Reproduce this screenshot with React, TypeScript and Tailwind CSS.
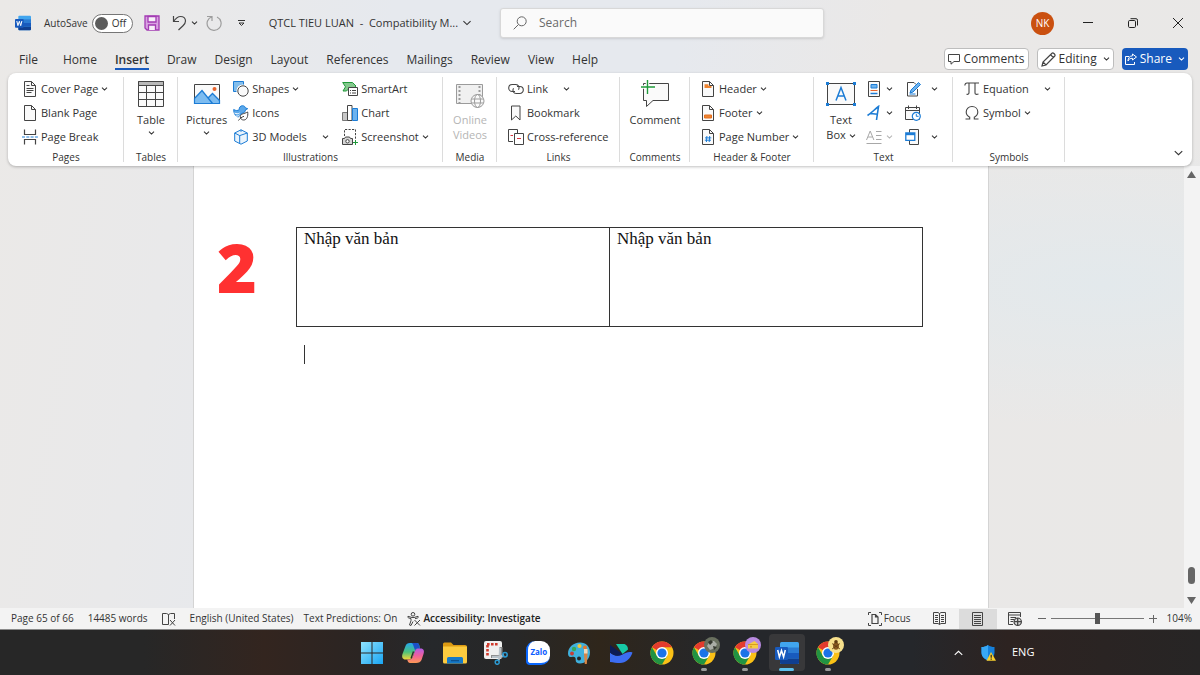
import React from "react";
import clsx from "clsx";

type IconProps = { className?: string };

const ink = "#444444";
const blue = "#1c7cd5";

const Arrow = ({ className = "h-[4px] w-[7px]" }: IconProps) => (
  <svg className={clsx("shrink-0", className)} viewBox="0 0 7 4" fill="none" stroke="currentColor" strokeWidth="1.1">
    <path d="M1 .7 3.5 3.1 6 .7" vectorEffect="non-scaling-stroke" />
  </svg>
);

const WordLogo = ({ className = "" }: IconProps) => (
  <svg className={className} viewBox="0 0 24 24">
    <rect x="5" y="1" width="19" height="22" rx="1.5" fill="#41a5ee" />
    <path d="M5 6.500h19V12H5z" fill="#2b7cd3" />
    <path d="M5 12h19v5.500H5z" fill="#185abd" />
    <path d="M5 17.500h19v4a1.500 1.500 0 0 1-1.500 1.500H6.500A1.500 1.500 0 0 1 5 21.500z" fill="#103f91" />
    <rect x="0" y="6" width="13" height="13" rx="1.300" fill="#185abd" />
    <path d="m2.700 9 1.700 7 2.100-6.600L8.600 16l1.700-7" fill="none" stroke="#fff" strokeWidth="1.500" />
  </svg>
);

const Sheet = ({ children }: { children?: React.ReactNode }) => (
  <svg className="h-4 w-4" viewBox="0 0 16 16" fill="none" stroke={ink}>
    <path d="M2.500.500h7L13.500 4.500v11h-11z" fill="#fafafa" />
    <path d="M9.500.500v4h4" />
    {children}
  </svg>
);

const CoverPageIcon = () => (
  <Sheet>
    <path d="M4.500 4.500h3M4.500 7.500h7M4.500 9.500h7M4.500 11.500h5" />
  </Sheet>
);

const PageBreakIcon = () => (
  <svg className="h-4 w-4" viewBox="0 0 16 16" fill="none" stroke={ink}>
    <path d="M2.500.500v5h11v-5M2.500 15.500v-5h11v5" strokeWidth="1.200" />
    <path d="M0 8h16" stroke={blue} strokeDasharray="3 1.300" />
  </svg>
);

const TableIcon = () => (
  <svg className="h-[28px] w-[28px]" viewBox="0 0 28 28" fill="none" stroke={ink}>
    <path d="M1.500 1.500h25v25h-25z" fill="#fafafa" />
    <path d="M1.500 1.500h25v4h-25z" fill="#b8b8b8" />
    <path d="M1.500 12.500h25M1.500 19.500h25M9.500 5.500v21M18.500 5.500v21" />
  </svg>
);

const PicturesIcon = () => (
  <svg className="h-[28px] w-[28px]" viewBox="0 0 28 28" fill="none">
    <path d="M1.500 4.500h25v19h-25z" fill="#fafafa" stroke={ink} />
    <path d="M2 18.500 9 10.500l10 13H2z" fill="#7dbcf0" />
    <path d="m14.500 18.500 5-5 7 7v3H18z" fill="#7dbcf0" />
    <path d="M1.500 18.500 9 10.500l10.500 13M15 18l4.500-4.500 7 7" stroke={blue} strokeWidth="1.300" />
    <path d="M1.500 18.500v5h25V20" stroke={blue} strokeWidth="1.200" />
    <circle cx="21.500" cy="9" r="2" fill="#e8642c" />
  </svg>
);

const ShapesIcon = () => (
  <svg className="h-4 w-4" viewBox="0 0 16 16" fill="none">
    <path d="M.5.500h10v10H.5z" fill="#83beec" stroke={blue} />
    <circle cx="10" cy="10" r="5.200" fill="#fafafa" stroke="#fff" strokeWidth="2.800" />
    <circle cx="10" cy="10" r="5.200" stroke={ink} />
  </svg>
);

const IconsIcon = () => (
  <svg className="h-4 w-4" viewBox="0 0 16 16" fill="none">
    <path d="M.7 4.500c2 1.300 4 1.300 5.500.2C6 2.300 7.500.700 9.500.700c1.700 0 2.700 1 2.900 2.200l2.300.8-2.300 1.200C12.300 6.500 11.500 7.500 10 8 7 8.500 5.500 12 5.500 12 2.500 11.500.700 8.500.700 4.500z" fill="#5ba8ea" stroke={blue} />
    <path d="M1.500 8c2 1 3.500 1 5 0M3 11c1.500.3 2.500 0 3.500-1" stroke="#fff" />
    <path d="M14.700 7c.6 4.500-1 8-3.900 8-2 0-3.500-1.200-3.500-3.200 0-3.200 3.700-2.800 7.400-4.800z" fill="#fff" stroke={ink} />
    <path d="M5.500 15.500c1-1.700 3-3.500 5.500-4.200" stroke={ink} />
  </svg>
);

const CubeIcon = () => (
  <svg className="h-4 w-4" viewBox="0 0 16 16" fill="none" stroke={blue} strokeLinejoin="round">
    <path d="m8 .8 6.300 3.200v8L8 15.200 1.700 12V4z" fill="#eaf4fc" />
    <path d="m1.700 4 5 2.600v7.800M6.700 6.600 14.300 4M8 .8v2" />
  </svg>
);

const SmartArtIcon = () => (
  <svg className="h-4 w-4" viewBox="0 0 16 16" fill="none">
    <path d="M.7 1.500h9.800l3.500 3.500-3 3H6.500L4.500 10H1l2.500-4.200z" fill="#84c98d" stroke="#209a3b" />
    <path d="M6.500 6.500h9v8h-9z" fill="#fff" stroke={ink} />
    <path d="M8 9.500h1M8 12h1M10 9.500h4M10 12h4" stroke={ink} />
  </svg>
);

const ChartIcon = () => (
  <svg className="h-4 w-4" viewBox="0 0 16 16">
    <path d="M.5 7.500h5v8h-5z" fill="#c8c8c8" stroke="#777" />
    <path d="M5.500.500h4.500v15H5.500z" fill="#fff" stroke={ink} />
    <path d="M10.500 3.500h5v12h-5z" fill="#6db3ef" stroke={blue} />
  </svg>
);

const ScreenshotIcon = () => (
  <svg className="h-4 w-4" viewBox="0 0 16 16" fill="none">
    <path d="M2.500 7V.5h11v10" stroke={ink} strokeDasharray="2.200 1.300" />
    <path d="M.5 9.500h2l1-1.500h4l1 1.500h2v6H.5z" fill="#d5d5d5" stroke={ink} />
    <circle cx="5.500" cy="12.300" r="1.700" fill="#fff" stroke={ink} />
    <path d="M13.500 11v5M11 13.500h5" stroke="#209a3b" />
  </svg>
);

const VideoIcon = () => (
  <svg className="h-[28px] w-[30px]" viewBox="0 0 30 28" fill="none" stroke="#9b9b9b">
    <path d="M1.500 4.500h26v19h-26z" fill="#f0f0f0" />
    <path d="M4.500 6v17M24.500 6v9" strokeWidth="2" strokeDasharray="2 2" />
    <circle cx="22.500" cy="21" r="6.500" fill="#fafafa" />
    <ellipse cx="22.500" cy="21" rx="3" ry="6.500" />
    <path d="M16.500 19h12M16.500 23h12" />
  </svg>
);

const LinkIcon = () => (
  <svg className="h-4 w-4" viewBox="0 0 16 16" fill="none" stroke={ink} strokeWidth="1.100">
    <path d="M7 10.500H4.200a3.500 3.500 0 0 1 0-7h3.600a3.400 3.400 0 0 1 2.700 5.300" />
    <path d="M9 5.500h2.800a3.500 3.500 0 0 1 0 7H8.200a3.400 3.400 0 0 1-2.700-5.300" />
  </svg>
);

const BookmarkIcon = () => (
  <svg className="h-4 w-4" viewBox="0 0 16 16" fill="none" stroke={ink}>
    <path d="M3.500 1h8.500v14l-4.200-4-4.300 4z" fill="#fafafa" />
  </svg>
);

const CrossRefIcon = () => (
  <svg className="h-4 w-4" viewBox="0 0 16 16" fill="none" stroke={ink}>
    <path d="M5 12.500H.5v-12h9V4" />
    <path d="M6.500 4.500h9v11h-9z" fill="#fff" />
    <path d="M2.500 6.500H5M9 9.500h4" stroke="#d9363e" />
  </svg>
);

const CommentIcon = () => (
  <svg className="h-[28px] w-[30px]" viewBox="0 0 30 28" fill="none">
    <path d="M3.500 3.500h25v17H13l-6.500 6v-6h-3z" fill="#fafafa" stroke={ink} />
    <path d="M7.500 0v14M1 7h14" stroke="#fff" strokeWidth="3.500" />
    <path d="M7.500 0v14M1 7h14" stroke="#209a3b" strokeWidth="1.400" />
  </svg>
);

const HeaderIcon = () => (
  <Sheet>
    <path d="M4.500 4.200h4M4.500 6h7" stroke="#ee8430" strokeWidth="1.800" />
  </Sheet>
);

const FooterIcon = () => (
  <Sheet>
    <path d="M4.500 10h7v3h-7z" fill="#ee8430" stroke="#e36f1e" />
  </Sheet>
);

const PageNumberIcon = () => (
  <Sheet>
    <path d="M6.900 7 6.400 13M9.700 7 9.200 13M5 8.900h6.300M4.800 11.200H11" stroke={blue} />
  </Sheet>
);

const TextBoxIcon = () => (
  <svg className="h-[28px] w-[30px]" viewBox="0 0 30 28" fill="none">
    <path d="M1.500 3.500h27v21h-27z" fill="#fafafa" stroke={ink} />
    <path d="M0 2h3v3H0zM27 2h3v3h-3zM0 23h3v3H0zM27 23h3v3h-3z" fill={blue} />
    <path d="m10 20.500 5-13 5 13M11.500 16h7" stroke={blue} strokeWidth="1.500" />
  </svg>
);

const QuickPartsIcon = () => (
  <svg className="h-4 w-4" viewBox="0 0 16 16" fill="none">
    <path d="M2.500.500h11v15h-11z" fill="#fafafa" stroke={ink} />
    <path d="M5 3.500h6v3.500H5z" fill="#6db3ef" stroke={blue} />
    <path d="M4.500 9.500h7" stroke="#e8642c" />
    <path d="M4.500 12.500h7" stroke={blue} strokeWidth="1.500" />
  </svg>
);

const WordArtIcon = () => (
  <svg className="h-4 w-4" viewBox="0 0 16 16" fill="none" stroke={blue} strokeWidth="1.600">
    <path d="M1.500 10.500C6 7.500 9 4 12.500 1.500l-2 13.500M4.500 8.500l7 .8" />
  </svg>
);

const DropCapIcon = () => (
  <svg className="h-4 w-4" viewBox="0 0 16 16" fill="none" stroke="#a8a8a8">
    <path d="m.5 11 3.700-9 3.700 9M2 8h4.500M10 2.500h5.500M10 6.500h5.500M10 10.500h5.500M.5 14.500h15" />
  </svg>
);

const SignatureIcon = () => (
  <svg className="h-4 w-4" viewBox="0 0 16 16" fill="none">
    <path d="M9 1.500H2.500v13.500h10V8M9 1.500 11 3.500" stroke={ink} />
    <path d="m6 9 7.500-7.500 2 2L8 11l-3 1z" fill="#6db3ef" stroke={blue} />
    <path d="M4.500 13h6" stroke={blue} />
  </svg>
);

const DateIcon = () => (
  <svg className="h-4 w-4" viewBox="0 0 16 16" fill="none">
    <path d="M.5 2.500h14v12H.5z" fill="#fafafa" stroke={ink} />
    <path d="M.5 5.500h14M3.500.5V4M11.500.5V4" stroke={ink} />
    <circle cx="11.300" cy="11.300" r="4" fill="#fff" stroke={blue} strokeWidth="1.200" />
    <path d="M11.300 8.800v2.500h2.300" stroke={blue} />
  </svg>
);

const ObjectIcon = () => (
  <svg className="h-4 w-4" viewBox="0 0 16 16" fill="none">
    <path d="M4.500.500h9v15h-9z" fill="#fafafa" stroke={ink} />
    <path d="M.8 3.800h9v7.500h-9z" fill="#fff" stroke={blue} strokeWidth="1.300" />
    <path d="M1 4h9v2.200H1z" fill={blue} />
  </svg>
);

const EquationIcon = () => (
  <svg className="h-4 w-4" viewBox="0 0 16 16" fill="none" stroke={ink} strokeWidth="1.100">
    <path d="M.8 4.500C1 2.500 1.500 2 3 2h12M5 2v9.500c0 1.500-.8 2-2.500 1.800M11 2v10c0 1.500 1.500 1.700 3.500 1" />
  </svg>
);

const OmegaIcon = () => (
  <svg className="h-4 w-4" viewBox="0 0 16 16" fill="none" stroke={ink} strokeWidth="1.100">
    <path d="M1.500 14h4.200v-1.800C3.500 11 2.200 9.300 2.200 7c0-3.200 2.400-5.500 5.800-5.500S13.800 3.800 13.800 7c0 2.300-1.300 4-3.500 5.200V14h4.200" />
  </svg>
);

const ChromeLogo = ({ className = "" }: IconProps) => (
  <svg className={className} viewBox="0 0 24 24">
    <circle cx="12" cy="12" r="11.500" fill="#fbc116" />
    <path d="M12 12 2 6.200A11.500 11.500 0 0 1 22 6.200H12z" fill="#e33b2e" />
    <path d="M2 6.200A11.500 11.500 0 0 0 12 23.500l5-8.500L12 12 7 15z" fill="#229342" />
    <circle cx="12" cy="12" r="6" fill="#fff" />
    <circle cx="12" cy="12" r="4.600" fill="#1a73e8" />
  </svg>
);

type RowButtonProps = {
  icon: React.ReactNode;
  label: string;
  arrow?: boolean;
  spaced?: boolean;
};

const RowButton = ({ icon, label, arrow, spaced }: RowButtonProps) => (
  <button type="button" className="flex h-6 items-center gap-[3px] whitespace-nowrap">
    {icon}
    <span>{label}</span>
    {arrow && <Arrow className={clsx("h-[4px] w-[7px]", spaced && "ml-3")} />}
  </button>
);

type BigButtonProps = {
  icon: React.ReactNode;
  label: React.ReactNode;
  arrow?: boolean;
  disabled?: boolean;
};

const BigButton = ({ icon, label, arrow, disabled }: BigButtonProps) => (
  <button
    type="button"
    disabled={disabled}
    className="flex flex-col items-center pt-[3px] leading-[15px] disabled:text-[#b5b5b5]"
  >
    {icon}
    <span className="mt-1">{label}</span>
    {arrow && <Arrow className="mt-1 h-[4px] w-[7px]" />}
  </button>
);

type SmallButtonProps = {
  icon: React.ReactNode;
  name: string;
  arrow?: boolean;
  spaced?: boolean;
  disabled?: boolean;
};

const SmallButton = ({ icon, name, arrow = true, spaced, disabled }: SmallButtonProps) => (
  <button
    type="button"
    aria-label={name}
    disabled={disabled}
    className={clsx("flex h-6 items-center disabled:text-[#b5b5b5]", spaced ? "gap-[10px]" : "gap-1")}
  >
    {icon}
    {arrow && <Arrow />}
  </button>
);

type GroupProps = { title: string; className: string; rowClassName?: string; children: React.ReactNode };

const Group = ({ title, className, rowClassName, children }: GroupProps) => (
  <section
    className={clsx(
      "relative flex shrink-0 flex-col pt-1 after:absolute after:top-1 after:right-0 after:bottom-1 after:w-px after:bg-[#dcdcdc]",
      className,
    )}
  >
    <div className={clsx("flex h-[72px]", rowClassName)}>{children}</div>
    <h2 className="text-center text-[10px] leading-4">{title}</h2>
  </section>
);

const Ribbon = () => (
  <div className="relative z-10 mx-2 flex h-[93px] shrink-0 rounded-lg bg-white text-[11px] shadow-[0_1px_3px_rgba(0,0,0,0.25)]">
    <Group title="Pages" className="w-[116px]" rowClassName="pl-[14px]">
      <div>
        <RowButton icon={<CoverPageIcon />} label="Cover Page" arrow />
        <RowButton icon={<Sheet />} label="Blank Page" />
        <RowButton icon={<PageBreakIcon />} label="Page Break" />
      </div>
    </Group>
    <Group title="Tables" className="w-[54px]" rowClassName="justify-center">
      <BigButton icon={<TableIcon />} label="Table" arrow />
    </Group>
    <Group title="Illustrations" className="w-[265px]" rowClassName="pl-2">
      <BigButton icon={<PicturesIcon />} label="Pictures" arrow />
      <div className="ml-[6px] w-[109px]">
        <RowButton icon={<ShapesIcon />} label="Shapes" arrow />
        <RowButton icon={<IconsIcon />} label="Icons" />
        <RowButton icon={<CubeIcon />} label="3D Models" arrow spaced />
      </div>
      <div>
        <RowButton icon={<SmartArtIcon />} label="SmartArt" />
        <RowButton icon={<ChartIcon />} label="Chart" />
        <RowButton icon={<ScreenshotIcon />} label="Screenshot" arrow />
      </div>
    </Group>
    <Group title="Media" className="w-[54px]" rowClassName="justify-center">
      <BigButton icon={<VideoIcon />} label={<>Online<br />Videos</>} disabled />
    </Group>
    <Group title="Links" className="w-[123px]" rowClassName="pl-[11px]">
      <div>
        <RowButton icon={<LinkIcon />} label="Link" arrow spaced />
        <RowButton icon={<BookmarkIcon />} label="Bookmark" />
        <RowButton icon={<CrossRefIcon />} label="Cross-reference" />
      </div>
    </Group>
    <Group title="Comments" className="w-[70px]" rowClassName="justify-center">
      <BigButton icon={<CommentIcon />} label="Comment" />
    </Group>
    <Group title="Header &amp; Footer" className="w-[124px]" rowClassName="pl-[10px]">
      <div>
        <RowButton icon={<HeaderIcon />} label="Header" arrow />
        <RowButton icon={<FooterIcon />} label="Footer" arrow />
        <RowButton icon={<PageNumberIcon />} label="Page Number" arrow />
      </div>
    </Group>
    <Group title="Text" className="w-[139px]" rowClassName="pl-3">
      <BigButton
        icon={<TextBoxIcon />}
        label={<>Text<br />Box <Arrow className="inline-block h-[4px] w-[7px]" /></>}
      />
      <div className="ml-[10px]">
        <SmallButton icon={<QuickPartsIcon />} name="Quick Parts" />
        <SmallButton icon={<WordArtIcon />} name="WordArt" />
        <SmallButton icon={<DropCapIcon />} name="Drop Cap" disabled />
      </div>
      <div className="ml-3">
        <SmallButton icon={<SignatureIcon />} name="Signature Line" spaced />
        <SmallButton icon={<DateIcon />} name="Date and Time" arrow={false} />
        <SmallButton icon={<ObjectIcon />} name="Object" spaced />
      </div>
    </Group>
    <Group title="Symbols" className="w-[112px]" rowClassName="pl-[11px]">
      <div>
        <RowButton icon={<EquationIcon />} label="Equation" arrow spaced />
        <RowButton icon={<OmegaIcon />} label="Symbol" arrow />
      </div>
    </Group>
    <button type="button" aria-label="Collapse ribbon" className="mr-2 mb-[10px] ml-auto self-end">
      <Arrow className="h-[6px] w-[11px]" />
    </button>
  </div>
);

const TitleBar = () => (
  <header className="flex h-[46px] shrink-0 items-center">
    <div className="flex w-5/12 items-center pl-[15px] text-[11px]">
      <WordLogo className="h-4 w-4" />
      <label className="ml-[13px] flex items-center gap-1 text-[10px]">
        AutoSave
        <span className="flex h-[19px] w-[41px] items-center gap-1 rounded-full border border-[#767676] bg-white pl-[2px]">
          <input type="checkbox" className="h-[13px] w-[13px] appearance-none rounded-full bg-[#5c5c5c]" />
          Off
        </span>
      </label>
      <button type="button" aria-label="Save" className="ml-[11px]">
        <svg className="h-4 w-4" viewBox="0 0 16 16" fill="none" stroke="#a33bb3" strokeWidth="1.300">
          <path d="M1 1h14v14H3l-2-2z" fill="#d9a3e2" />
          <path d="M4 1.500h8v5.500H4zM4.500 15v-5h7v5" fill="#f7f0f8" />
        </svg>
      </button>
      <button type="button" aria-label="Undo" className="ml-3 flex items-center gap-1">
        <svg className="h-4 w-[15px]" viewBox="0 0 15 16" fill="none" stroke={ink} strokeWidth="1.200">
          <path d="M1.500 1v5.500H7M1.500 6.500C4 3 6 1.500 8.500 1.500c3 0 5 2 5 4.500 0 2-1 3.300-2.500 4.700L6.500 15" />
        </svg>
        <Arrow />
      </button>
      <button type="button" aria-label="Repeat" className="ml-2">
        <svg className="h-4 w-4" viewBox="0 0 16 16" fill="none" stroke="#9d9d9d" strokeWidth="1.200">
          <path d="M1 1.500h5V6M6 1.700A7 7 0 1 0 11 2" />
        </svg>
      </button>
      <button type="button" aria-label="Customize toolbar" className="ml-4">
        <svg className="h-[7px] w-[7px]" viewBox="0 0 7 7" fill="none" stroke="#333">
          <path d="M0 .5h7M1 3l2.500 2.500L6 3z" />
        </svg>
      </button>
      <button type="button" className="ml-6 flex items-center gap-1 whitespace-nowrap">
        <span>QTCL TIEU LUAN&nbsp; -&nbsp; Compatibility M...</span>
        <Arrow className="h-[6px] w-[10px]" />
      </button>
    </div>
    <div className="flex h-[30px] w-[27%] items-center gap-3 rounded-[3px] border border-[#d8d8d8] bg-[#fafafa] pl-3 shadow-sm">
      <svg className="h-[14px] w-[14px]" viewBox="0 0 14 14" fill="none" stroke="#666">
        <circle cx="8.700" cy="5.300" r="4.500" />
        <path d="M5.500 8.500.7 13.300" />
      </svg>
      <input
        type="search"
        aria-label="Search"
        placeholder="Search"
        className="min-w-0 flex-1 bg-transparent text-xs outline-none placeholder:text-[#6a6a6a]"
      />
    </div>
    <div className="ml-auto flex">
      <button type="button" className="flex w-[45px] justify-center">
        <span className="flex h-[23px] w-[23px] items-center justify-center rounded-full bg-[#ca5010] text-[10px] text-white">
          NK
        </span>
      </button>
      <button type="button" aria-label="Minimize" className="flex w-[45px] items-center justify-center">
        <svg className="h-[10px] w-[10px]" viewBox="0 0 10 10" stroke="#222"><path d="M0 4.500h10" /></svg>
      </button>
      <button type="button" aria-label="Restore" className="flex w-[45px] items-center justify-center">
        <svg className="h-[10px] w-[10px]" viewBox="0 0 10 10" fill="none" stroke="#222">
          <rect x=".5" y="2.500" width="7" height="7" rx="1.200" />
          <path d="M2.500.7H8A1.500 1.500 0 0 1 9.500 2.200v5.300" />
        </svg>
      </button>
      <button type="button" aria-label="Close" className="flex w-[45px] items-center justify-center">
        <svg className="h-[10px] w-[10px]" viewBox="0 0 10 10" stroke="#222"><path d="m0 0 10 10M10 0 0 10" /></svg>
      </button>
    </div>
  </header>
);

const tabs = [
  "File",
  "Home",
  "Insert",
  "Draw",
  "Design",
  "Layout",
  "References",
  "Mailings",
  "Review",
  "View",
  "Help",
];

const TabBar = () => (
  <nav className="flex h-[27px] shrink-0 items-start pr-3 pl-[19px] text-xs">
    <div className="flex gap-[18px]">
      {tabs.map((tab) => (
        <button
          key={tab}
          type="button"
          className={clsx(
            "h-6 border-b-2 pt-[6px] leading-4 first:mr-[7px]",
            tab === "Insert" ? "border-[#185abd] font-semibold" : "border-transparent",
          )}
        >
          {tab}
        </button>
      ))}
    </div>
    <div className="ml-auto flex gap-2 pt-[2px] whitespace-nowrap">
      <button type="button" className="flex h-[22px] items-center gap-[3px] rounded border border-[#bdbdbd] bg-white px-[3px]">
        <svg className="h-3 w-3" viewBox="0 0 12 12" fill="none" stroke={ink}>
          <path d="M.5 1.500h11v7H6l-3 2.700V8.500H.5z" />
        </svg>
        Comments
      </button>
      <button type="button" className="flex h-[22px] items-center gap-[3px] rounded border border-[#bdbdbd] bg-white px-[3px]">
        <svg className="h-[15px] w-[15px]" viewBox="0 0 15 15" fill="none" stroke={ink} strokeWidth="1.200">
          <path d="M1 14l1-4L11 1.200c1-1 4 1.600 2.800 2.800L5 13zM9.500 2.700l2.800 2.800M2 10l3 3" />
        </svg>
        Editing
        <Arrow className="ml-[3px] h-[4px] w-[7px]" />
      </button>
      <button type="button" className="flex h-[22px] items-center gap-[3px] rounded bg-[#185abd] px-[3px] text-white">
        <svg className="h-3 w-3" viewBox="0 0 12 12" fill="none" stroke="#fff">
          <path d="M4 3.500H.5v8h9V9M7.500 1l4 3-4 3V5.300C5 5.300 4 6 3 8c0-3 1.500-5 4.500-5.200z" />
        </svg>
        Share
        <Arrow className="ml-[3px] h-[4px] w-[7px]" />
      </button>
    </div>
  </nav>
);

const DocumentArea = () => (
  <main className="flex min-h-0 flex-1">
    <div className="flex min-w-0 flex-1 justify-center pr-[2px]">
      <article className="flex w-[796px] border-x border-[#d4d4d4] bg-white pt-[61px] pr-[65px]">
        <div className="w-[102px] shrink-0 pt-1 pl-[23px] font-['Open_Sans'] text-[68px] leading-[72px] font-extrabold text-[#ff3131]">
          2
        </div>
        <div className="flex-1 font-['Liberation_Serif',serif] text-[17px] text-[#111]">
          <table className="h-[100px] w-full table-fixed border-collapse">
            <tbody>
              <tr>
                <td className="border border-[#333] px-[7px] pt-px align-top leading-5">Nhập văn bản</td>
                <td className="border border-[#333] px-[7px] pt-px align-top leading-5">Nhập văn bản</td>
              </tr>
            </tbody>
          </table>
          <div className="mt-[18px] ml-2 h-[19px] w-px bg-[#333]" />
        </div>
      </article>
    </div>
    <div className="flex w-4 flex-col items-center bg-[#f3f3f3] py-1 pr-px text-[#666]">
      <svg className="mt-px h-[7px] w-[9px]" viewBox="0 0 9 7" fill="currentColor"><path d="M4.500 0 9 7H0z" /></svg>
      <div className="mt-auto mb-[13px] h-[17px] w-[7px] rounded-full bg-[#666]" />
      <svg className="h-[7px] w-[9px]" viewBox="0 0 9 7" fill="currentColor"><path d="M0 0h9L4.500 7z" /></svg>
    </div>
  </main>
);

const StatusBar = () => (
  <footer className="flex h-[22px] shrink-0 items-center border-b border-[#8a8a8a] bg-[#f3f3f3] pr-2 pl-[11px] text-[10px] whitespace-nowrap">
    <span>Page 65 of 66</span>
    <span className="ml-[14px]">14485 words</span>
    <button type="button" aria-label="Proofing errors" className="ml-[14px]">
      <svg className="h-[14px] w-[14px]" viewBox="0 0 14 14" fill="none" stroke={ink}>
        <path d="M6.500 12.500H.5v-11h4l2 1 2-1h4V7M6.500 2.500v10M8 8l5 5.500M13 8l-5 5.500" />
      </svg>
    </button>
    <span className="ml-[14px]">English (United States)</span>
    <span className="ml-[10px]">Text Predictions: On</span>
    <button type="button" className="ml-[10px] flex items-center gap-[2px] font-semibold text-[#222]">
      <svg className="h-[14px] w-[14px]" viewBox="0 0 14 14" fill="none" stroke={ink}>
        <circle cx="6" cy="2.300" r="1.800" />
        <path d="M1 4.300c-.6 1 0 1.400 1 1.700l2 .6v2L2.500 13l1.500.5L6 9.500M1 4.300l4 1.200h2l4-1.200c.7 1 .2 1.500-.8 1.800L8 6.700M7.500 8l5.500 5.500M13 8l-5.500 5.500" />
      </svg>
      Accessibility: Investigate
    </button>

    <button type="button" className="ml-auto flex items-center gap-[2px]">
      <svg className="h-[14px] w-[14px]" viewBox="0 0 14 14" fill="none" stroke={ink}>
        <path d="M3 .5H.5V3M11 .5h2.500V3M3 13.500H.5V11M11 13.500h2.500V11" />
        <path d="M4 2.500h3.500L10 5v6.500H4zM7.500 2.500V5H10" strokeWidth="1.200" />
      </svg>
      Focus
    </button>
    <button type="button" aria-label="Read mode" className="ml-[22px]">
      <svg className="h-[13px] w-[13px]" viewBox="0 0 13 13" fill="none" stroke={ink}>
        <path d="M.5.500h4.500l1.500 1 1.500-1h4.500v11H8l-1.500 1-1.500-1H.5zM6.500 1.500v11M2 3.500h3M2 5.500h3M2 7.500h3M2 9.500h3M8 3.500h3M8 5.500h3M8 7.500h3M8 9.500h3" />
      </svg>
    </button>
    <button type="button" aria-label="Print layout" className="ml-[13px] flex h-5 w-[38px] items-center justify-center bg-[#dcdcdc]">
      <svg className="h-[14px] w-[11px]" viewBox="0 0 11 14" fill="none" stroke={ink}>
        <path d="M.5.5h10v13H.5zM2 3.500h7M2 5.500h7M2 7.500h7M2 9.500h7M2 11.500h7" />
      </svg>
    </button>
    <button type="button" aria-label="Web layout" className="ml-[11px]">
      <svg className="h-[14px] w-[14px]" viewBox="0 0 14 14" fill="none" stroke={ink}>
        <path d="M5 12.500H.5v-12h12V5M.5 3h12M2.500 5.500H8M2.500 7.500H6M2.500 9.500H5" />
        <circle cx="9.700" cy="9.700" r="3.700" fill="#ddd" strokeWidth="1.200" />
        <path d="M6 9.700h7.500M9.700 6v7.500" strokeWidth="1.300" />
      </svg>
    </button>
    <button type="button" aria-label="Zoom out" className="ml-4">
      <svg className="h-2 w-2" viewBox="0 0 8 8" stroke="#666"><path d="M0 3.500h8" /></svg>
    </button>
    <input
      type="range"
      aria-label="Zoom"
      min={0}
      max={100}
      defaultValue={50}
      className="mx-[5px] h-3 w-[93px] appearance-none bg-transparent bg-[linear-gradient(#777,#777)] bg-[length:100%_1px] bg-center bg-no-repeat [&::-webkit-slider-thumb]:h-[11px] [&::-webkit-slider-thumb]:w-[5px] [&::-webkit-slider-thumb]:appearance-none [&::-webkit-slider-thumb]:bg-[#555]"
    />
    <button type="button" aria-label="Zoom in">
      <svg className="h-2 w-2" viewBox="0 0 8 8" stroke="#666"><path d="M0 3.500h8M4.500 0v8" /></svg>
    </button>
    <span className="ml-[10px]">104%</span>
  </footer>
);

const StartLogo = () => (
  <svg className="h-6 w-6" viewBox="0 0 24 24">
    <defs>
      <linearGradient id="start" x1="0" y1="0" x2="1" y2="1">
        <stop offset="0" stopColor="#8fe3ff" />
        <stop offset="1" stopColor="#19a5f2" />
      </linearGradient>
    </defs>
    <path d="M1 1h10.500v10.500H1zM12.500 1H23v10.500H12.500zM1 12.500h10.500V23H1zM12.500 12.500H23V23H12.500z" fill="url(#start)" />
  </svg>
);

const CopilotLogo = () => (
  <svg className="h-6 w-6" viewBox="0 0 24 24">
    <defs>
      <linearGradient id="cpA" x1="0" y1="0" x2="0" y2="1">
        <stop offset="0" stopColor="#25a7ef" />
        <stop offset=".55" stopColor="#4cc27a" />
        <stop offset="1" stopColor="#f3d53a" />
      </linearGradient>
      <linearGradient id="cpB" x1="0" y1="0" x2="0" y2="1">
        <stop offset="0" stopColor="#b35ce6" />
        <stop offset=".5" stopColor="#f0609a" />
        <stop offset="1" stopColor="#fd9a55" />
      </linearGradient>
    </defs>
    <path d="M9 2h7c1.500 0 2 1 2.300 2.500L19 7.500h-2c-1.500 0-2.500 1-3 2.500l-2.500 6.500c-.5 1.300-1.500 2-3 2H4.500c-3 0-4-2.500-3-5.500l3-8C5.200 3 6.500 2 9 2z" fill="url(#cpA)" />
    <path d="M10 2h6c1.500 0 2 1 2.300 2.500L19 7.500h-2c-1.500 0-2.300.6-2.900 2L12 3.500C11.500 2.500 11 2 10 2z" fill="#1c50c8" />
    <path d="M15 22H9c-1.500 0-2-1-2.500-2.500l-.3-1h2.300c1.500 0 2.500-.7 3-2L14 10c.5-1.500 1.500-2.500 3-2.500h2.500c3.500 0 4 2.500 3 5.500l-2 6c-.9 2-2.500 3-5.500 3z" fill="url(#cpB)" />
    <path d="m12.500 10.500-2.500 7" stroke="#26282b" strokeWidth="1.300" />
  </svg>
);

const FolderLogo = () => (
  <svg className="h-6 w-6" viewBox="0 0 24 24">
    <path d="M0 3A1.500 1.500 0 0 1 1.500 1.500H8L10.500 4H22a2 2 0 0 1 2 2v4H0z" fill="#dc9a12" />
    <path d="M0 5.500h24V21a1.500 1.500 0 0 1-1.500 1.500h-21A1.500 1.500 0 0 1 0 21z" fill="#fccb3f" />
    <path d="M4 22.500v-5A1.500 1.500 0 0 1 5.500 16h13a1.500 1.500 0 0 1 1.500 1.500v5z" fill="#1579c8" />
    <path d="M8 19h8v1.300H8z" fill="#0c5290" />
  </svg>
);

const SnipLogo = () => (
  <svg className="h-6 w-6" viewBox="0 0 24 24" fill="none">
    <rect x="0" y="0" width="18" height="18" rx="2" fill="#f0f0f0" />
    <path d="M3 3.300H14M3.500 4v11" stroke="#d03a2c" strokeWidth="2.600" strokeDasharray="2.600 1.400" />
    <path d="M7 15.500h10V6" stroke="#8d8d8d" strokeWidth="3" />
    <path d="m16 7-.3 7.500M8 16l8-.3M16 16l4-2M16 16l-2 4" stroke="#b9c2c9" strokeWidth="2" />
    <circle cx="21" cy="13.800" r="2.200" stroke="#2b9bd4" strokeWidth="1.500" />
    <circle cx="13.200" cy="21.300" r="2" stroke="#2b9bd4" strokeWidth="1.500" />
  </svg>
);

const ZaloLogo = () => (
  <span className="flex h-6 w-6 items-center justify-center rounded-[9px] rounded-bl-sm border-b-2 border-l-2 border-[#0a68ff] bg-white font-['Open_Sans'] text-[8px] font-bold text-[#0a5cff]">
    Zalo
  </span>
);

const PaintLogo = () => (
  <svg className="h-6 w-6" viewBox="0 0 24 24">
    <path d="M13 1.500C6 1.500 1 6.500 1 12.500c0 3 2 4 4 3.500 2.500-.6 4 .5 3.700 3C8.500 21 10 22.500 13 22.500c5.500 0 10-5 10-11C23 5.500 19 1.500 13 1.500z" fill="#3fb0dc" />
    <circle cx="7" cy="8" r="2.200" fill="#3aa957" />
    <circle cx="12.500" cy="5" r="2.100" fill="#f4c534" />
    <circle cx="18" cy="6.500" r="2" fill="#e8762d" />
    <circle cx="5" cy="12.500" r="1.900" fill="#c83b34" />
    <circle cx="12" cy="17.500" r="2" fill="#262626" />
    <path d="M17 8h3.500v5l-.7 10h-2L17 13z" fill="#d98545" />
    <path d="M17 8h3.500v4.500H17z" fill="#ecd9bd" />
  </svg>
);

const LensLogo = () => (
  <svg className="h-6 w-6" viewBox="0 0 24 24">
    <path d="M7 3h8.500c2.500 1 3.500 3 3.500 5.500L13.500 13z" fill="#17c9a5" />
    <path d="M1 11.500C4 14.500 9 16 13.500 13.500 17 11.500 20 10.500 23.500 11.500 21.500 17.500 17 22 11 22 8 22 4 21.500 1 21z" fill="#3c6df2" />
    <path d="m1 4 12.500 9c-4.500 3-9.500 1.500-12.500-1.500z" fill="#0d1c55" />
  </svg>
);

type TaskProps = { name: string; open?: boolean; active?: boolean; children: React.ReactNode };

const Task = ({ name, open, active, children }: TaskProps) => (
  <button
    type="button"
    aria-label={name}
    className={clsx(
      "flex h-[37px] w-9 flex-col items-center justify-between rounded pt-[7px]",
      active && "bg-[#38383a]",
    )}
  >
    <span className="relative">{children}</span>
    {open && <span className="h-[3px] w-[6px] rounded-full bg-[#9a9a9a]" />}
    {active && <span className="h-[3px] w-[15px] rounded-full bg-[#5cc0ee]" />}
  </button>
);

const Taskbar = () => (
  <div className="grid h-[45px] shrink-0 grid-cols-[1fr_auto_1fr] items-center bg-[linear-gradient(90deg,#272727_0%,#272727_12%,#33251f_22%,#2b2523_30%,#26282b_36%,#272727_43%,#2f261b_50%,#25272b_60%,#25272b_76%,#2d2321_84%,#272525_100%)]">
    <div />
    <div className="flex w-[492px] justify-between">
      <Task name="Start"><StartLogo /></Task>
      <Task name="Copilot"><CopilotLogo /></Task>
      <Task name="File Explorer"><FolderLogo /></Task>
      <Task name="Snipping Tool"><SnipLogo /></Task>
      <Task name="Chat"><ZaloLogo /></Task>
      <Task name="Paint"><PaintLogo /></Task>
      <Task name="Lens"><LensLogo /></Task>
      <Task name="Chrome"><ChromeLogo className="h-6 w-6" /></Task>
      <Task name="Chrome, profile 1" open>
        <ChromeLogo className="h-6 w-6" />
        <svg className="absolute -top-1 left-3 h-4 w-4" viewBox="0 0 16 16">
          <circle cx="8" cy="8" r="8" fill="#69705f" />
          <path d="M3 9c2-4 4-5 7-5l3 3-2 4-5 2z" fill="#a9ada5" />
          <path d="m4 5 3-2 2 2-3 3zM9 9l4 1-3 3z" fill="#34382f" />
        </svg>
      </Task>
      <Task name="Chrome, profile 2" open>
        <ChromeLogo className="h-6 w-6" />
        <svg className="absolute -top-1 left-3 h-4 w-4" viewBox="0 0 16 16">
          <circle cx="8" cy="8" r="8" fill="#b98ae0" />
          <path d="M3 7.500 9.500 4 13 7v4.500H3z" fill="#f6cc45" />
          <path d="M3 7.500h10" stroke="#d89c22" />
          <circle cx="6" cy="9.800" r="1" fill="#d89c22" />
        </svg>
      </Task>
      <Task name="Word" active><WordLogo className="h-6 w-6" /></Task>
      <Task name="Chrome, profile 3" open>
        <ChromeLogo className="h-6 w-6" />
        <svg className="absolute -top-1 left-3 h-4 w-4" viewBox="0 0 16 16">
          <circle cx="8" cy="8" r="8" fill="#f7e08c" />
          <ellipse cx="8" cy="9" rx="3" ry="3.700" fill="#8a5a20" />
          <circle cx="8" cy="4.800" r="1.800" fill="#5f3b12" />
          <path d="M4 6.500 12 12M12 6.500 4 12" stroke="#5f3b12" strokeWidth=".8" />
        </svg>
      </Task>
    </div>
    <div className="flex items-center pl-[107px] text-[11px] text-white">
      <button type="button" aria-label="Show hidden icons">
        <Arrow className="h-[6px] w-[11px] rotate-180" />
      </button>
      <svg className="ml-4 h-4 w-4" viewBox="0 0 16 16">
        <path d="M8 0c2 1.500 4 2 6.500 2v5.500C14.500 11 12 14 8 15.500 4 14 1.500 11 1.500 7.500V2C4 2 6 1.500 8 0z" fill="#1580dc" />
        <path d="M8 0v15.500C4 14 1.500 11 1.500 7.500V2C4 2 6 1.500 8 0z" fill="#38a8f5" />
        <path d="m11 7 5 8.700H6.500z" fill="#f9cf2c" />
        <path d="M11.200 9.800v3M11.200 13.500v1.200" stroke="#222" strokeWidth="1.200" />
      </svg>
      <button type="button" className="ml-4">ENG</button>
    </div>
  </div>
);

export default function App() {
  return (
    <div className="flex h-screen flex-col overflow-hidden bg-[radial-gradient(ellipse_at_92%_42%,#e3e9ec_0%,#e3e9ec00_26%),linear-gradient(100deg,#ebe9e7_0%,#e9e9ea_16%,#e6e9ee_30%,#e6e9ee_52%,#eae8e7_68%,#e9e8e7_100%)] font-['Open_Sans',sans-serif] text-[#333]">
      <TitleBar />
      <TabBar />
      <Ribbon />
      <DocumentArea />
      <StatusBar />
      <Taskbar />
    </div>
  );
}
